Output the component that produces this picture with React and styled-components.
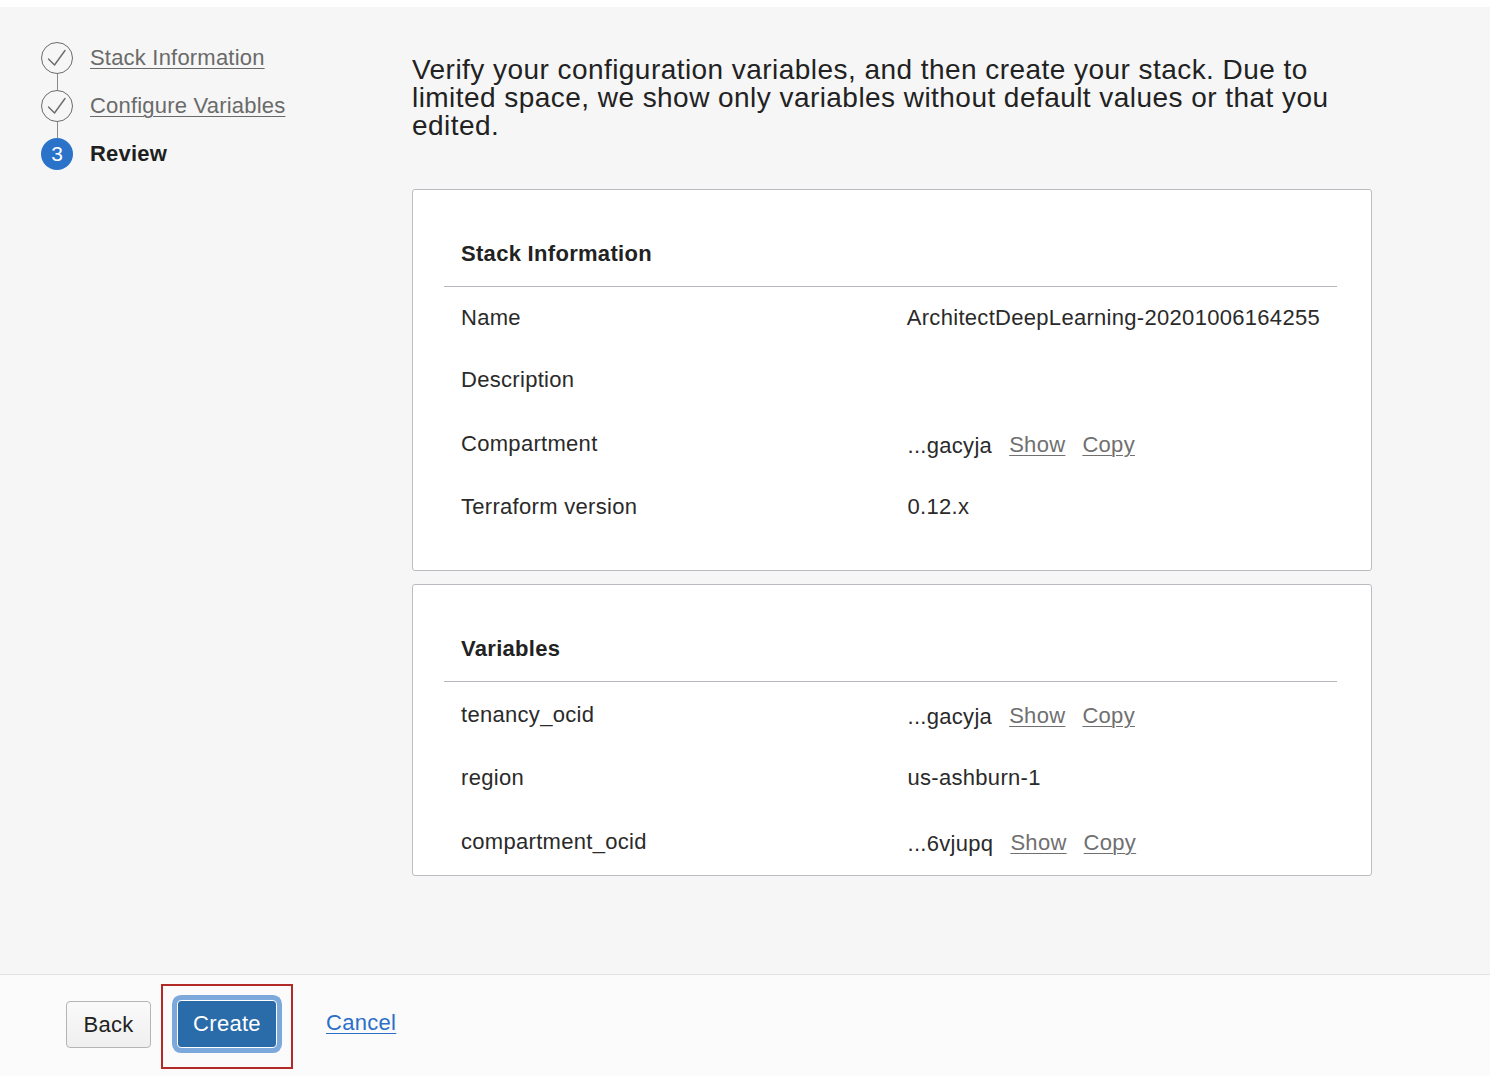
import styled, { createGlobalStyle } from "styled-components";

const GlobalStyle = createGlobalStyle`
  html, body {
    margin: 0;
    padding: 0;
    background: #ffffff;
    font-family: "Liberation Sans", Arial, Helvetica, sans-serif;
    color: #222222;
  }
`

const PageStyled = styled.div`
  display: flex;
  flex-direction: column;
  width: 1490px;
  height: 1076px;
  overflow: hidden;
  background: #ffffff;
`
const TopStrip = styled.div`
  height: 7px;
  flex: none;
`
const MainStyled = styled.div`
  height: 967px;
  flex: none;
  box-sizing: border-box;
  background: #f6f6f6;
  display: grid;
  grid-template-columns: 371px 960px;
  padding-left: 41px;
`
const StepperStyled = styled.div`
  display: flex;
  flex-direction: column;
  padding-top: 35px;
`
const StepStyled = styled.div`
  display: flex;
  align-items: center;
  gap: 17px;
  height: 32px;
`
const CircleStyled = styled.div`
  width: 32px;
  height: 32px;
  box-sizing: border-box;
  border-radius: 50%;
  display: flex;
  align-items: center;
  justify-content: center;
  flex: none;
  border: ${p => p.$active ? "none" : "1.5px solid #6b6b6b"};
  background: ${p => p.$active ? "#2a73c9" : "transparent"};
  color: #ffffff;
  font-size: 21px;
`
const Connector = styled.div`
  width: 1.5px;
  height: 16px;
  margin-left: 15.5px;
  background: #8a8a8a;
`
const StepLabel = styled.a`
  font-size: 22px;
  letter-spacing: 0.2px;
  color: ${p => p.$active ? "#1f1f1f" : "#6a6a6a"};
  font-weight: ${p => p.$active ? 700 : 400};
  text-decoration: ${p => p.$active ? "none" : "underline"};
  text-underline-offset: 3px;
  text-decoration-thickness: 1px;
`
const ContentStyled = styled.div`
  padding-top: 49px;
  display: flex;
  flex-direction: column;
`
const IntroStyled = styled.p`
  margin: 0 0 49px;
  font-size: 28px;
  letter-spacing: 0.45px;
  line-height: 28px;
  color: #222222;
`
const CardStyled = styled.div`
  background: #ffffff;
  border: 1px solid #b9bdc1;
  border-radius: 3px;
  padding: 0 34px ${p => p.$padBottom}px 31px;
  margin-bottom: 13px;
`
const CardTitle = styled.h2`
  margin: 0;
  padding: 41px 17px 9px;
  line-height: 46px;
  font-size: 22px;
  letter-spacing: 0.3px;
  font-weight: 700;
  color: #222222;
  border-bottom: 1px solid #b4b8bc;
`
const RowStyled = styled.div`
  display: grid;
  grid-template-columns: 1fr 1fr;
  height: ${p => p.$tall ? 65 : 62}px;
  align-items: center;
  font-size: 22px;
  letter-spacing: 0.3px;
  line-height: 22px;
  color: #2a2a2a;
`
const CellStyled = styled.div`
  padding: 0 17px;
  display: flex;
  align-items: center;
  gap: 17px;
  white-space: nowrap;
`
const Masked = styled.span`
  position: relative;
  top: 2px;
`
const GrayLink = styled.a`
  color: #707070;
  text-decoration: underline;
  text-underline-offset: 3px;
  text-decoration-thickness: 1px;
  position: relative;
  top: 1px;
`
const FooterStyled = styled.div`
  height: 93px;
  flex: none;
  background: #fbfbfb;
  border-top: 1px solid #e1e1e1;
  display: flex;
  align-items: flex-start;
  padding-left: 66px;
  padding-top: 9px;
  box-sizing: content-box;
`
const BackButton = styled.button`
  margin-top: 17px;
  width: 85px;
  height: 47px;
  box-sizing: border-box;
  border: 1px solid #b5b5b5;
  border-radius: 4px;
  background: linear-gradient(#fafafa, #efefef);
  font-family: inherit;
  font-size: 22px;
  letter-spacing: 0.3px;
  color: #222222;
  margin-right: 10px;
`
const Highlight = styled.div`
  border: 2px solid #b22a25;
  padding: 14px 14px 19px;
  height: 85px;
  box-sizing: border-box;
`
const CreateButton = styled.button`
  width: 100px;
  height: 48px;
  box-sizing: border-box;
  border: 1px solid #ffffff;
  border-radius: 4px;
  background: #2a6ba9;
  box-shadow: 0 0 0 5px #7da8dc;
  font-family: inherit;
  font-size: 22px;
  letter-spacing: 0.3px;
  color: #ffffff;
`
const CancelLink = styled.a`
  margin: 26px 0 0 33px;
  font-size: 22px;
  letter-spacing: 0.3px;
  color: #2c6fc8;
  text-decoration: underline;
  text-underline-offset: 3px;
  text-decoration-thickness: 1px;
`

const Check = () => (
    <svg width="22" height="22" viewBox="0 0 22 22" fill="none">
        <path d="M2.5 12 L8.5 18 L19 3.5" stroke="#6b6b6b" strokeWidth="1.4" strokeLinecap="round" strokeLinejoin="round"/>
    </svg>
)

const Secret = ({value}) => (
    <>
        <Masked>{value}</Masked>
        <GrayLink>Show</GrayLink>
        <GrayLink>Copy</GrayLink>
    </>
)

const stackRows = [
    {label: "Name", value: "ArchitectDeepLearning-20201006164255"},
    {label: "Description", value: ""},
    {label: "Compartment", secret: "...gacyja"},
    {label: "Terraform version", value: "0.12.x"},
]
const variableRows = [
    {label: "tenancy_ocid", secret: "...gacyja"},
    {label: "region", value: "us-ashburn-1"},
    {label: "compartment_ocid", secret: "...6vjupq"},
]

const Card = ({title, rows, padBottom}) => (
    <CardStyled $padBottom={padBottom}>
        <CardTitle>{title}</CardTitle>
        {rows.map(row => (
            <RowStyled key={row.label} $tall={!!row.secret}>
                <CellStyled>{row.label}</CellStyled>
                <CellStyled>
                    {row.secret ? <Secret value={row.secret}/> : row.value}
                </CellStyled>
            </RowStyled>
        ))}
    </CardStyled>
)

export default function App() {
    return (
        <PageStyled>
            <GlobalStyle/>
            <TopStrip/>
            <MainStyled>
                <StepperStyled>
                    <StepStyled>
                        <CircleStyled><Check/></CircleStyled>
                        <StepLabel>Stack Information</StepLabel>
                    </StepStyled>
                    <Connector/>
                    <StepStyled>
                        <CircleStyled><Check/></CircleStyled>
                        <StepLabel>Configure Variables</StepLabel>
                    </StepStyled>
                    <Connector/>
                    <StepStyled>
                        <CircleStyled $active>3</CircleStyled>
                        <StepLabel $active>Review</StepLabel>
                    </StepStyled>
                </StepperStyled>

                <ContentStyled>
                    <IntroStyled>
                        Verify your configuration variables, and then create your stack. Due to limited space, we show only variables without default values or that you edited.
                    </IntroStyled>
                    <Card title="Stack Information" rows={stackRows} padBottom={32}/>
                    <Card title="Variables" rows={variableRows} padBottom={1}/>
                </ContentStyled>
            </MainStyled>

            <FooterStyled>
                <BackButton>Back</BackButton>
                <Highlight>
                    <CreateButton>Create</CreateButton>
                </Highlight>
                <CancelLink>Cancel</CancelLink>
            </FooterStyled>
        </PageStyled>
    )
}
